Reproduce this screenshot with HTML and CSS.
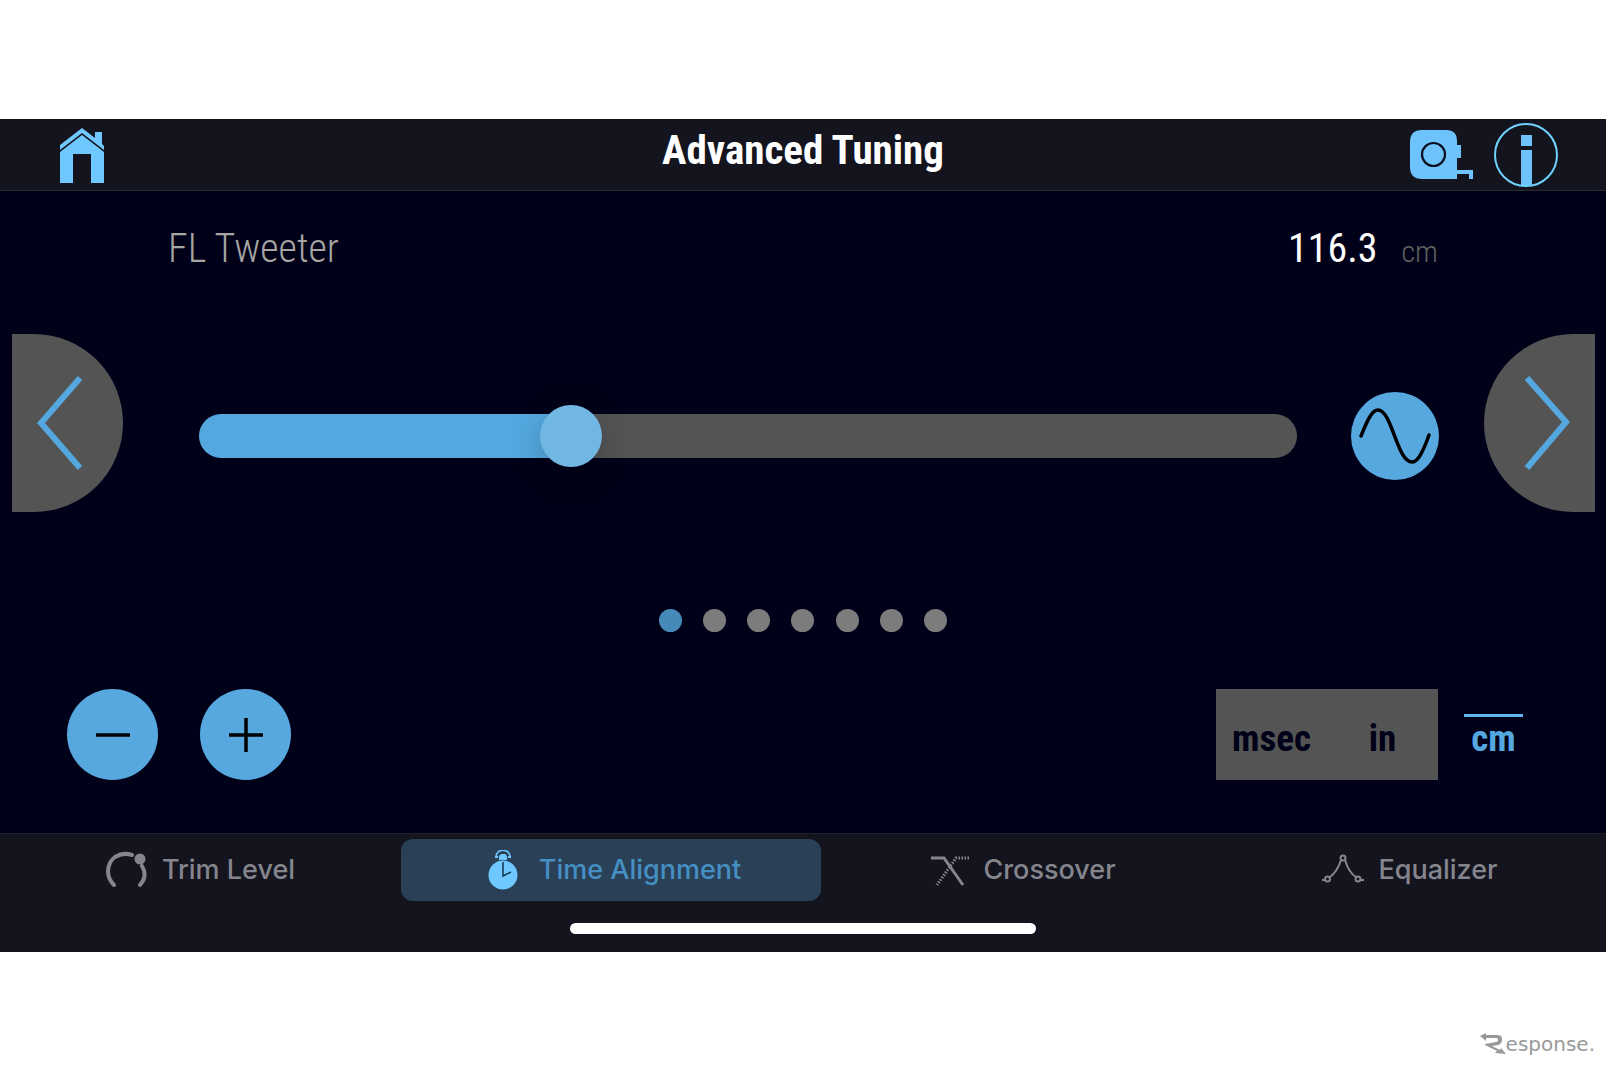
FILE: index.html
```html
<!DOCTYPE html>
<html lang="en">
<head>
<meta charset="utf-8">
<meta name="viewport" content="width=device-width, initial-scale=1">
<title>Advanced Tuning</title>
<link rel="stylesheet" href="styles.css">
</head>
<body>
<div class="app">
  <header class="topbar">
    <div class="topbar-side topbar-left">
      <button class="icon-button" type="button" aria-label="Home">
        <svg width="46" height="56" viewBox="0 0 46 56" fill="#6fc8ff">
          <path d="M1 18 23 1 36 11V5h7v12l2 2v4L23 6 1 23Z"/>
          <path d="M1 25 23 8l22 17v31H32V27H14v29H1Z"/>
        </svg>
      </button>
    </div>
    <h1 class="title">Advanced Tuning</h1>
    <div class="topbar-side topbar-right">
      <button class="icon-button" type="button" aria-label="Measure">
        <svg width="64" height="50" viewBox="0 0 64 50">
          <path fill="#6fc3fd" d="M12 0h24q11 0 11 11v4h4v13h-4v12h16v9h-4v-5H47v5H12Q0 49 0 37V12Q0 0 12 0Z"/>
          <circle cx="23.500" cy="24.500" r="11.500" fill="none" stroke="#0c1020" stroke-width="2.200"/>
        </svg>
      </button>
      <button class="icon-button" type="button" aria-label="Information">
        <svg width="64" height="64" viewBox="0 0 64 64">
          <circle cx="32" cy="32" r="31" fill="none" stroke="#70d4ff" stroke-width="2"/>
          <path fill="#6fc3fd" d="M27 12h11v11H27zM27 27h11v35H27z"/>
        </svg>
      </button>
    </div>
  </header>

  <main class="panel">
    <div class="readout">
      <label class="channel" for="distance">FL Tweeter</label>
      <output class="reading" for="distance">116.3 <span class="reading-unit">cm</span></output>
    </div>

    <div class="stage">
      <button class="pager pager-prev" type="button" aria-label="Previous channel">
        <svg width="48" height="100" viewBox="0 0 48 100" fill="none" stroke="#54a8df" stroke-width="6"><path d="M44 5 5 50 44 95"/></svg>
      </button>
      <div class="control">
        <input class="slider" id="distance" type="range" min="0" max="353" step="0.1" value="116.3">
        <button class="round wave" type="button" aria-label="Test tone">
          <svg width="88" height="88" viewBox="0 0 88 88" fill="none" stroke="#000" stroke-width="3.500" stroke-linecap="round"><path d="M10 44C18 24 22 18 27 18C41 18 46 70 61 70C66 70 71 63 78 43"/></svg>
        </button>
      </div>
      <button class="pager pager-next" type="button" aria-label="Next channel">
        <svg width="48" height="100" viewBox="0 0 48 100" fill="none" stroke="#54a8df" stroke-width="6"><path d="M4 5 43 49 4 95"/></svg>
      </button>
    </div>

    <div class="dots">
      <span class="dot dot-on"></span><span class="dot"></span><span class="dot"></span><span class="dot"></span><span class="dot"></span><span class="dot"></span><span class="dot"></span>
    </div>

    <div class="actions">
      <div class="steppers">
        <button class="round step" type="button" aria-label="Decrease">
          <svg width="34" height="34" viewBox="0 0 34 34" stroke="#000" stroke-width="3.500"><path d="M0 17h34"/></svg>
        </button>
        <button class="round step" type="button" aria-label="Increase">
          <svg width="34" height="34" viewBox="0 0 34 34" stroke="#000" stroke-width="3.500"><path d="M0 17h34M17 0v34"/></svg>
        </button>
      </div>
      <div class="units">
        <button class="unit" type="button">msec</button>
        <button class="unit" type="button">in</button>
        <button class="unit unit-on" type="button"><span class="unit-label">cm</span></button>
      </div>
    </div>
  </main>

  <footer class="bottombar">
    <nav class="tabs">
      <a class="tab" href="#trim">
        <svg width="42" height="38" viewBox="0 0 42 38" fill="none" stroke="#85858d" stroke-width="4" stroke-linecap="round"><path d="M8 34C-1 25 1 12 9 6Q17 1 26 4M36 15Q42 25 34 34"/><circle cx="34" cy="8" r="5.500" fill="#85858d" stroke="none"/></svg>
        Trim Level
      </a>
      <a class="tab tab-on" href="#time">
        <svg width="32" height="40" viewBox="0 0 32 40"><circle cx="16" cy="25" r="14.500" fill="#6fc8ff"/><path d="M12 10V6l2-2h4l2 2v4ZM8 6h3v2H8zM21 6h3v2h-3z" fill="#6fc8ff"/><path d="M9 7C9-2 23-2 23 7" fill="none" stroke="#6fc8ff" stroke-width="1.500"/><path d="M16 12v14l8-4" fill="none" stroke="#15354d" stroke-width="1.500"/></svg>
        Time Alignment
      </a>
      <a class="tab" href="#crossover">
        <svg width="38" height="32" viewBox="0 0 38 32" fill="none" stroke="#85858d" stroke-width="3"><path d="M0 4h13L32 31"/><path d="M38 4H25L6 31" stroke-dasharray="1.500 1.500"/></svg>
        Crossover
      </a>
      <a class="tab" href="#equalizer">
        <svg width="42" height="32" viewBox="0 0 42 32" fill="none" stroke="#85858d" stroke-width="2"><path d="M0 26h3M8 23Q15 18 19 6M23 6Q27 19 34 23M39 26h3"/><circle cx="21" cy="4" r="2.500"/><circle cx="5.500" cy="25" r="2.500"/><circle cx="36" cy="25" r="2.500"/></svg>
        Equalizer
      </a>
    </nav>
    <div class="home-indicator"></div>
  </footer>
</div>

<div class="credit">
  <svg width="26" height="22" viewBox="0 0 26 22" fill="#999"><path d="M0 3 6 0v2h11q5 0 5 4v1q0 4-4 5l-6 1 8 4 1-2 5 6-11-1 2-2-12-6v-1l11-2q2 0 2-2 0-2-2-2H6v3Z"/></svg>
  <span>esponse.</span>
</div>
</body>
</html>
```
FILE: styles.css
```css
* {
  box-sizing: border-box;
}

body {
  margin: 0;
  padding-top: 119px;
  background: #fff;
  font-family: Inter, "Liberation Sans", sans-serif;
}

button {
  border: 0;
  padding: 0;
  background: none;
  font: inherit;
  cursor: pointer;
}

svg {
  display: block;
  flex: none;
}

.app {
  background: #000018;
}

.topbar {
  display: grid;
  grid-template-columns: 1fr auto 1fr;
  align-items: center;
  height: 72px;
  padding: 0 48px;
  background: #14141f;
  border-bottom: 1px solid #2a2a32;
}

.topbar-side {
  display: flex;
  align-items: center;
  gap: 20px;
}

.topbar-left {
  padding-left: 11px;
}

.topbar-right {
  justify-content: flex-end;
}

.title,
.readout,
.units {
  font-family: "Agency FB", "Roboto Condensed", "Liberation Sans Narrow", "Liberation Sans", sans-serif;
}

.title {
  margin: 0;
  padding-bottom: 10px;
  color: #fff;
  font-size: 41px;
  line-height: 60px;
  font-weight: 700;
}

.readout {
  display: flex;
  justify-content: space-between;
  align-items: baseline;
  padding: 28px 168px 0;
  height: 143px;
  font-size: 40px;
  line-height: 60px;
  font-weight: 300;
}

.channel {
  color: #a5a5a2;
}

.reading {
  display: flex;
  align-items: baseline;
  gap: 24px;
  color: #fff;
  font-weight: 400;
}

.reading-unit {
  color: #62625f;
  font-size: 30px;
  font-weight: 300;
}

.stage {
  display: flex;
  align-items: center;
  padding: 0 11px 0 12px;
}

.pager {
  display: flex;
  align-items: center;
  width: 111px;
  height: 178px;
  padding: 0 24px;
  background: #545454;
}

.pager-prev {
  border-radius: 0 89px 89px 0;
}

.pager-next {
  justify-content: flex-end;
  border-radius: 89px 0 0 89px;
}

.control {
  display: flex;
  flex: 1;
  align-items: center;
  gap: 54px;
  padding: 25px 45px 0 76px;
}

.slider {
  appearance: none;
  flex: 1;
  min-width: 0;
  height: 62px;
  margin: 0;
  background: none;
}

.slider::-webkit-slider-runnable-track {
  height: 44px;
  border-radius: 22px;
  background: linear-gradient(to right, #54a8df 34%, #545454 34%);
}

.slider::-webkit-slider-thumb {
  appearance: none;
  width: 62px;
  height: 62px;
  margin-top: -9px;
  border-radius: 50%;
  background: #70b7e3;
  box-shadow: 0 8px 32px rgba(0, 0, 0, 0.2);
}

.round {
  display: flex;
  align-items: center;
  justify-content: center;
  flex: none;
  border-radius: 50%;
  background: #57a8df;
}

.wave {
  width: 88px;
  height: 88px;
}

.dots {
  display: flex;
  justify-content: space-between;
  width: 289px;
  margin: 97px auto 0;
}

.dot {
  width: 23px;
  height: 23px;
  border-radius: 50%;
  background: #7c7c7c;
}

.dot-on {
  background: #468aba;
}

.actions {
  display: flex;
  justify-content: space-between;
  padding: 57px 57px 53px 67px;
}

.steppers {
  display: flex;
  gap: 42px;
}

.step {
  width: 91px;
  height: 91px;
}

.units {
  display: flex;
}

.unit {
  width: 111px;
  height: 91px;
  padding-top: 8px;
  background: #545454;
  color: #000018;
  font-size: 37px;
  line-height: 40px;
  font-weight: 700;
}

.unit-on {
  background: none;
  color: #54a8df;
}

.unit-label {
  display: inline-block;
  padding: 2px 7px 4px;
  border-top: 3px solid #5cb5f0;
}

.bottombar {
  padding: 5px 0 18px;
  background: #14141f;
  border-top: 1px solid #20202c;
}

.tabs {
  display: grid;
  grid-template-columns: 401fr 420fr 405fr 368fr;
  padding-right: 12px;
}

.tab {
  display: flex;
  align-items: center;
  justify-content: center;
  gap: 14px;
  height: 62px;
  border-radius: 12px;
  color: #85858d;
  font-size: 27px;
  line-height: 32px;
  font-weight: 500;
  text-decoration: none;
}

.tab-on {
  gap: 20px;
  padding-left: 6px;
  background: #294057;
  color: #468fc3;
}

.home-indicator {
  width: 29%;
  height: 11px;
  margin: 22px auto 0;
  border-radius: 6px;
  background: #fff;
}

.credit {
  display: flex;
  justify-content: flex-end;
  align-items: center;
  padding: 80px 11px 0 0;
  color: #999;
  font-family: "DejaVu Sans", sans-serif;
  font-size: 20px;
  line-height: 24px;
}
```
